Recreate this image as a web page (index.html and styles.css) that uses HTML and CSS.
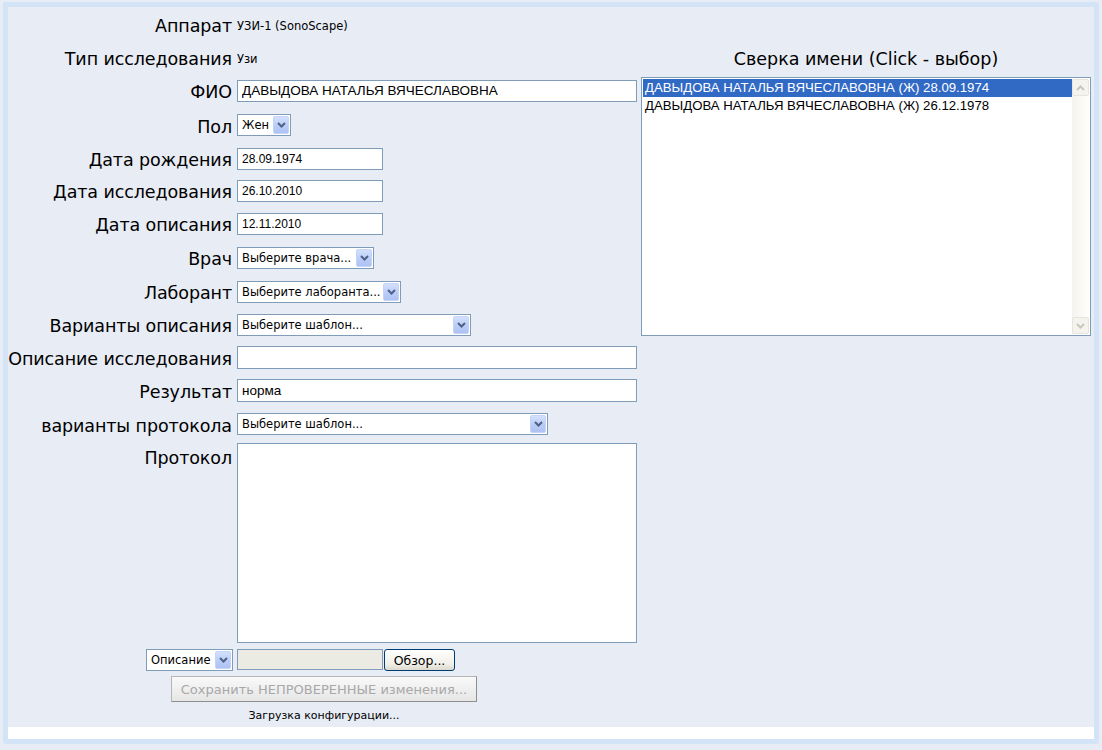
FILE: index.html
```html
<!DOCTYPE html>
<html lang="ru">
<head>
<meta charset="utf-8">
<title>Исследование</title>
<link rel="stylesheet" href="styles.css">
</head>
<body>
<div class="frame">
  <div class="content">
    <form class="form">
      <div class="grid">
        <div class="lbl">Аппарат</div><div class="val">УЗИ-1 (SonoScape)</div>
        <div class="lbl">Тип исследования</div><div class="val">Узи</div>
        <div class="lbl">ФИО</div><div><input class="inp w400 h22 big" value="ДАВЫДОВА НАТАЛЬЯ ВЯЧЕСЛАВОВНА"></div>
        <div class="lbl">Пол</div><div><span class="sel w54"><select><option>Жен</option></select><span class="arr"><svg width="9" height="6" viewBox="0 0 9 6"><path d="M1 1 L4.5 4.5 L8 1" fill="none" stroke="#4d6185" stroke-width="2"/></svg></span></span></div>
        <div class="lbl">Дата рождения</div><div><input class="inp w146 h22" value="28.09.1974"></div>
        <div class="lbl">Дата исследования</div><div><input class="inp w146 h22" value="26.10.2010"></div>
        <div class="lbl">Дата описания</div><div><input class="inp w146 h22" value="12.11.2010"></div>
        <div class="lbl">Врач</div><div><span class="sel w137"><select><option>Выберите врача...</option></select><span class="arr"><svg width="9" height="6" viewBox="0 0 9 6"><path d="M1 1 L4.5 4.5 L8 1" fill="none" stroke="#4d6185" stroke-width="2"/></svg></span></span></div>
        <div class="lbl">Лаборант</div><div><span class="sel w164"><select><option>Выберите лаборанта...</option></select><span class="arr"><svg width="9" height="6" viewBox="0 0 9 6"><path d="M1 1 L4.5 4.5 L8 1" fill="none" stroke="#4d6185" stroke-width="2"/></svg></span></span></div>
        <div class="lbl">Варианты описания</div><div><span class="sel w234"><select><option>Выберите шаблон...</option></select><span class="arr"><svg width="9" height="6" viewBox="0 0 9 6"><path d="M1 1 L4.5 4.5 L8 1" fill="none" stroke="#4d6185" stroke-width="2"/></svg></span></span></div>
        <div class="lbl">Описание исследования</div><div><input class="inp w400 h23 big" value=""></div>
        <div class="lbl">Результат</div><div><input class="inp w400 h23 big" value="норма"></div>
        <div class="lbl">варианты протокола</div><div><span class="sel w311"><select><option>Выберите шаблон...</option></select><span class="arr"><svg width="9" height="6" viewBox="0 0 9 6"><path d="M1 1 L4.5 4.5 L8 1" fill="none" stroke="#4d6185" stroke-width="2"/></svg></span></span></div>
        <div class="lbl lbl-top">Протокол</div><div class="cell-top"><textarea class="area"></textarea></div>
      </div>
      <div class="filerow">
        <div class="file-left"><span class="sel w86"><select><option>Описание</option></select><span class="arr"><svg width="9" height="6" viewBox="0 0 9 6"><path d="M1 1 L4.5 4.5 L8 1" fill="none" stroke="#4d6185" stroke-width="2"/></svg></span></span></div>
        <div class="file-right"><span class="filetext"></span><button type="button" class="browse">Обзор...</button></div>
      </div>
      <div class="actions"><button type="button" class="save" disabled>Сохранить НЕПРОВЕРЕННЫЕ изменения...</button></div>
      <div class="status">Загрузка конфигурации...</div>
    </form>
    <div class="side">
      <div class="side-title">Сверка имени (Click - выбор)</div>
      <div class="listbox">
        <div class="items">
          <div class="item active">ДАВЫДОВА НАТАЛЬЯ ВЯЧЕСЛАВОВНА (Ж) 28.09.1974</div>
          <div class="item">ДАВЫДОВА НАТАЛЬЯ ВЯЧЕСЛАВОВНА (Ж) 26.12.1978</div>
        </div>
        <div class="sbar">
          <div class="sbtn"><svg width="9" height="6" viewBox="0 0 9 6"><path d="M1 5 L4.5 1.5 L8 5" fill="none" stroke="#c9c7ba" stroke-width="2"/></svg></div>
          <div class="strack"></div>
          <div class="sbtn"><svg width="9" height="6" viewBox="0 0 9 6"><path d="M1 1 L4.5 4.5 L8 1" fill="none" stroke="#c9c7ba" stroke-width="2"/></svg></div>
        </div>
      </div>
    </div>
  </div>
  <div class="footer"></div>
</div>
</body>
</html>
```

FILE: styles.css
```css
* { box-sizing: border-box; }
html, body { margin: 0; padding: 0; }
body {
  background: #e8ecf5;
  font-family: "DejaVu Sans", Verdana, sans-serif;
  color: #000;
  width: 1102px;
  height: 750px;
  overflow: hidden;
}
.frame {
  margin: 2px 3px 0 3px;
  width: 1096px;
  border: 5px solid #d4e4f7;
  border-radius: 0 3px 3px 3px;
  background: #e8ecf5;
}
.content {
  display: flex;
  align-items: flex-start;
}
.form {
  width: 629px;
  margin: 0;
}
.grid {
  display: grid;
  grid-template-columns: 224px 400px;
  column-gap: 5px;
  grid-template-rows: 34px 33px 33px 36px 31px 33px 33px 35px 33px 33px 32px 35px 32px auto;
  align-items: center;
}
.lbl {
  text-align: right;
  font-size: 17.5px;
  line-height: 21px;
  white-space: nowrap;
  letter-spacing: -0.1px;
  margin-top: 4px;
}
.val {
  font-size: 11.5px;
  line-height: 14px;
  margin-top: 3px;
}
.lbl-top { align-self: start; margin-top: 0; padding-top: 8px; }
.cell-top { align-self: start; padding-top: 3px; }
.inp {
  display: block;
  border: 1px solid #7f9db9;
  background: #fff;
  padding: 0 4px;
  font-family: "Liberation Sans", Arial, sans-serif;
  font-size: 12px;
  color: #000;
  outline: none;
}
.inp.big { font-size: 13.5px; }
.w400 { width: 400px; }
.w146 { width: 146px; }
.h22 { height: 22px; }
.h23 { height: 23px; }
.sel {
  position: relative;
  display: block;
  height: 22px;
}
.sel select {
  appearance: none;
  -webkit-appearance: none;
  width: 100%;
  height: 100%;
  border: 1px solid #7f9db9;
  background: #fff;
  border-radius: 0;
  font-family: "DejaVu Sans", Verdana, sans-serif;
  font-size: 11.5px;
  padding: 0 0 0 4px;
  color: #000;
  outline: none;
}
.sel .arr {
  position: absolute;
  right: 2px;
  top: 2px;
  bottom: 2px;
  width: 16px;
  border: 1px solid #c4d3f6;
  border-radius: 2px;
  background: linear-gradient(#d3e0fd, #b8cbf7 60%, #aec2f4);
  display: flex;
  align-items: center;
  justify-content: center;
  pointer-events: none;
}
.w54 { width: 54px; }
.w137 { width: 137px; }
.w164 { width: 164px; }
.w234 { width: 234px; }
.w311 { width: 311px; }
.w86 { width: 87px; }
.area {
  display: block;
  width: 400px;
  height: 200px;
  border: 1px solid #7f9db9;
  background: #fff;
  resize: none;
  outline: none;
  margin: 0;
}
.filerow {
  display: grid;
  grid-template-columns: 225px 400px;
  column-gap: 4px;
  margin-top: 5px;
  align-items: center;
}
.file-left { justify-self: end; }
.file-right { display: flex; align-items: center; gap: 1px; }
.filetext {
  display: block;
  width: 146px;
  height: 21px;
  border: 1px solid #7f9db9;
  background: #ebeae3;
}
.browse {
  width: 71px;
  height: 22px;
  border: 1px solid #003c74;
  border-radius: 3px;
  background: linear-gradient(#ffffff, #f0efe8 70%, #dcd9cc);
  font-family: "DejaVu Sans", Verdana, sans-serif;
  font-size: 12.5px;
  color: #000;
  padding: 0;
  margin-top: 1px;
}
.actions {
  display: flex;
  justify-content: center;
  margin-top: 5px;
  padding-left: 3px;
}
.save {
  width: 306px;
  height: 26px;
  border: 1px solid #b5b5b5;
  border-right-color: #8e8e8e;
  border-bottom-color: #8e8e8e;
  background: linear-gradient(#f9f9f9, #e6e6e6);
  color: #a8a8a8;
  font-family: "DejaVu Sans", Verdana, sans-serif;
  font-size: 13px;
  padding: 0;
}
.status {
  text-align: center;
  font-size: 11px;
  line-height: 14px;
  margin-top: 7px;
  height: 18px;
  padding-left: 3px;
}
.side {
  width: 450px;
  margin-left: 4px;
  padding-top: 42px;
}
.side-title {
  text-align: center;
  font-size: 17.5px;
  line-height: 20px;
}
.listbox {
  margin-top: 8px;
  height: 259px;
  border: 1px solid #7f9db9;
  background: #fff;
  display: flex;
  padding: 1px;
}
.items {
  flex: 1;
  font-family: "Liberation Sans", Arial, sans-serif;
  font-size: 13.2px;
}
.item {
  height: 18px;
  line-height: 18px;
  padding-left: 2px;
  white-space: nowrap;
}
.item.active {
  background: #316ac5;
  color: #fff;
}
.sbar {
  width: 17px;
  display: flex;
  flex-direction: column;
  background: linear-gradient(90deg, #f4f3ee, #fefefb);
}
.sbtn {
  height: 17px;
  border: 1px solid #e8e6dc;
  border-radius: 2px;
  background: #f4f3ee;
  display: flex;
  align-items: center;
  justify-content: center;
}
.strack { flex: 1; }
.footer {
  height: 12px;
  background: #fff;
}
```
